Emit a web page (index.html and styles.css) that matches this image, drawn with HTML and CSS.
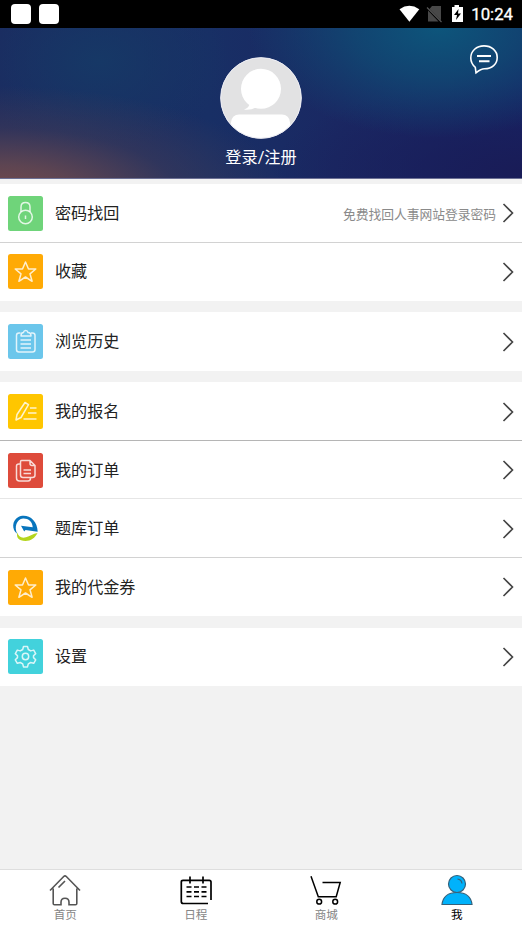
FILE: index.html
```html
<!DOCTYPE html>
<html lang="zh-CN">
<head>
<meta charset="utf-8">
<title>我</title>
<link rel="stylesheet" href="styles.css">
</head>
<body>
<svg class="defs" aria-hidden="true">
  <symbol id="star" viewBox="0 0 35 35"><path d="M17.500 8l3 7h7.300l-5.800 4.800 2.100 7.500-6.600-4.300-6.600 4.300 2.100-7.500L7.200 15h7.300z"/></symbol>
  <symbol id="arrow" viewBox="0 0 12 20"><path d="M1.500 1l9 9-9 9"/></symbol>
</svg>
<div class="screen">
  <div class="status">
    <i class="block"></i><i class="block"></i>
    <svg class="signals" width="66" height="20" viewBox="0 0 66 20">
      <path fill="#fff" d="M.5 5.200Q10.300 -1.500 20.300 5.200L10.400 17.800z"/>
      <path fill="#484848" d="M33 2h9v14.500L30.500 5zM29 6.500L39.500 17.500H29z"/>
      <path stroke="#555" stroke-width="1.300" d="M28 3.500l14.500 14.500"/>
      <path fill="#fff" d="M55.500 1h4.500v2h4v15H53V3h2.500z"/>
      <path fill="#000" d="M59.500 5l-4.500 6h3l-1 5 5-6.500h-3z"/>
    </svg>
    <span class="time">10:24</span>
  </div>
  <header class="profile">
    <svg class="avatar" width="82" height="82" viewBox="0 0 82 82">
      <clipPath id="round"><circle cx="41" cy="41" r="40"/></clipPath>
      <circle cx="41" cy="41" r="40.500" fill="#e2e2e3"/>
      <g clip-path="url(#round)" fill="#fff"><circle cx="41" cy="31.800" r="20"/><path d="M30 46q-1 5-6 6.500 6 1 12-2z"/><rect x="11" y="57.500" width="59" height="34" rx="8"/></g>
      <circle cx="41" cy="41" r="40.300" fill="none" stroke="#eeeef5"/>
    </svg>
    <span class="login">登录/注册</span>
    <svg class="chat" width="30" height="31" viewBox="0 0 30 31" fill="none" stroke="#fff">
      <path stroke-width="1.600" d="M6.300 23.300C3.300 20.800 1.800 17.500 1.800 14 1.800 6.800 7.500 1.900 15 1.900S28.200 6.800 28.200 13.500 23 24.800 15.500 24.800c-2.500 0-5 1.200-8.500 4z"/>
      <path stroke-width="2" d="M8 12h14M10 17.300h10.500"/>
    </svg>
  </header>
  <main>
    <section class="group">
      <div class="row"><svg class="icon green" viewBox="0 0 35 35"><circle cx="17.500" cy="21" r="6.800"/><path d="M13 16v-5q0-4.500 4.500-4.500t4.500 4.500v5M17.500 19.500v3.500"/></svg><span class="label">密码找回</span><span class="hint">免费找回人事网站登录密码</span><svg class="arrow"><use href="#arrow"/></svg></div>
      <div class="row"><svg class="icon orange"><use href="#star"/></svg><span class="label">收藏</span><svg class="arrow"><use href="#arrow"/></svg></div>
    </section>
    <section class="group">
      <div class="row"><svg class="icon blue" viewBox="0 0 35 35"><path d="M12.500 9H11q-2.500 0-2.500 2.500v14Q8.500 28 11 28h13.500q2.500 0 2.500-2.500v-14Q27 9 24.500 9H23M13 12h10q0-3.500-3-3.500-.5-2-2.300-2t-2.300 2q-2.400 0-2.400 3.500zM12.500 16H23M12.500 20H23M12.500 24H23"/></svg><span class="label">浏览历史</span><svg class="arrow"><use href="#arrow"/></svg></div>
    </section>
    <section class="group">
      <div class="row strong"><svg class="icon yellow" viewBox="0 0 35 35"><path d="M8 26l1-5.500L17 8.500l3.500 2.200L13 23.500zM22 14h6.500M20 19h8.500M15.500 25h13"/></svg><span class="label">我的报名</span><svg class="arrow"><use href="#arrow"/></svg></div>
      <div class="row light"><svg class="icon red" viewBox="0 0 35 35"><path d="M13.500 7.500H22l5 5V22q0 2.500-2.500 2.500h-9.500q-2.500 0-2.500-2.500V9q0-1.500 1-1.500zM22 7.500v3q0 2 2 2h3M12 11h-1q-2.500 0-2.500 2v12q0 3 3 3H20q2.500 0 2.500-3M15.500 17h7.500M15.500 20.500h7.500"/></svg><span class="label">我的订单</span><svg class="arrow"><use href="#arrow"/></svg></div>
      <div class="row"><svg class="icon brand" viewBox="0 0 35 35"><path fill="#0875bd" d="M9.200 22.800C3.500 18.500 4 9.500 10 6.200 18 1.800 29.500 7.500 29.700 20.800L17.500 19l-1.300 1.500L13 14.700l11.700 1.600C24.500 10.500 20 7.300 15 7.600 8.500 8.200 6 16.500 9.200 22.800z"/><path fill="#b4d51e" d="M9.500 21.500c.8 4.300 4 6 8.500 4.800 4-1 7-3.500 11.500-4.300-2.500 4.800-6.500 8-12 8-7 0-9.700-4-8-8.500z"/></svg><span class="label">题库订单</span><svg class="arrow"><use href="#arrow"/></svg></div>
      <div class="row"><svg class="icon orange"><use href="#star"/></svg><span class="label">我的代金券</span><svg class="arrow"><use href="#arrow"/></svg></div>
    </section>
    <section class="group">
      <div class="row"><svg class="icon cyan" viewBox="0 0 35 35"><circle cx="17.500" cy="17.500" r="3.200"/><path d="M15.500 7.500h4l.8 3 2.400 1.400 3-.8 2 3.500-2.200 2.200v1.800l2.200 2.200-2 3.500-3-.8-2.400 1.400-.8 3h-4l-.8-3-2.400-1.400-3 .8-2-3.500 2.200-2.200v-1.800l-2.200-2.200 2-3.500 3 .8 2.400-1.400z"/></svg><span class="label">设置</span><svg class="arrow"><use href="#arrow"/></svg></div>
    </section>
  </main>
  <nav class="tabs">
    <div class="tab"><svg viewBox="0 0 34 34" stroke="#555" stroke-width="1.600"><path d="M2 17.500L15.700 3.500q1.300-1.300 2.600 0L32 17.500M5.200 15.500v15q0 1.300 1.300 1.300H13v-2.500q0-4 4-4t4 4v2.500h6.500q1.300 0 1.300-1.300v-15M10.500 14.500l6.500-6.500"/></svg><span>首页</span></div>
    <div class="tab"><svg viewBox="0 0 34 34" stroke="#000" stroke-width="1.700"><path d="M32 27V9q0-1.700-1.700-1.700H4Q2.300 7.300 2.300 9v19.500q0 2 2 2H29M11 3.500v7M24 3.500v7M7.500 14h5M15 14h5M22.500 14h5M7.500 18.800h5M15 18.800h5M22.500 18.800h5M7.500 23.500h5M15 23.500h5M22.500 23.500h5"/></svg><span>日程</span></div>
    <div class="tab"><svg viewBox="0 0 34 34" stroke="#000" stroke-width="1.500"><path d="M2 3.300l7.300 20.500h17.900l4-14.300H13.500"/><circle cx="10.200" cy="28.700" r="2.400"/><circle cx="26.200" cy="28.700" r="2.400"/></svg><span>商城</span></div>
    <div class="tab active"><svg viewBox="0 0 34 34" stroke="#35617a" stroke-width="1.200"><path d="M2 31.500C3 23 9 19.500 17 19.500s14 3.500 15 12z"/><circle cx="17" cy="11" r="8.500"/><path fill="none" d="M17.500 6q4 .5 4.500 4.500"/></svg><span>我</span></div>
  </nav>
</div>
</body>
</html>
```
FILE: styles.css
```css
* { box-sizing: border-box; }
body { margin: 0; font-family: Roboto, "Noto Sans CJK SC", sans-serif; color: #222; }
.defs { display: none; }
.screen { width: 522px; height: 928px; display: flex; flex-direction: column; background: #f2f2f2; overflow: hidden; }
.status { height: 28px; flex: none; background: #000; display: flex; align-items: center; padding: 0 9px 0 11px; }
.block { width: 20px; height: 20px; border-radius: 4px; background: #fff; margin-right: 8px; }
.signals { margin-left: auto; margin-right: 6px; }
.time { color: #fff; font-size: 16.8px; line-height: 28px; -webkit-text-stroke: .3px #fff; }
.profile {
  position: relative; height: 151px; flex: none; display: flex; flex-direction: column; align-items: center; padding-top: 29px;
  border-bottom: 1px solid #6c7094;
  background:
    radial-gradient(ellipse 290px 110px at 0 112%, #784b4a 0, rgba(105,73,79,.85) 28%, rgba(70,60,85,.5) 62%, transparent 100%),
    radial-gradient(ellipse 190px 110px at 84% 0, #0d557b 0, rgba(15,77,117,.75) 45%, transparent 100%),
    radial-gradient(ellipse 130px 90px at 19% 22%, #163866 0, transparent 100%),
    radial-gradient(ellipse 250px 90px at 100% 95%, #191c57 0, transparent 100%),
    linear-gradient(90deg, #1b2b60, #182f65 40%, #1a2863 65%, #182365);
}
.login { color: #fff; font-size: 16.2px; line-height: 24px; margin-top: 7px; }
.chat { position: absolute; right: 23px; top: 16px; }
main { padding-top: 5px; }
.group { margin-bottom: 11.4px; background: #fff; }
.row { height: 58.5px; display: flex; align-items: center; padding: 1px 8px 0; border-bottom: 1px solid #d2d2d2; }
.row.strong { border-bottom-color: #b5b5b5; }
.row.light { border-bottom-color: #e6e6e6; }
.row:last-child { border-bottom: 0; padding-top: 0; }
.icon { width: 35px; height: 35px; flex: none; border-radius: 2.5px; fill: none; stroke: rgba(255,255,255,.8); stroke-width: 1.5; stroke-linejoin: round; }
.green { background: #6fd47a; }
.orange { background: #ffaa05; }
.blue { background: #6bc6eb; }
.yellow { background: #ffc600; }
.red { background: #de4b3b; }
.cyan { background: #42d2dc; }
.brand { stroke: none; }
.label { margin-left: 12px; padding-top: 1px; font-size: 16.1px; line-height: 24px; }
.hint { margin-left: auto; margin-right: 6px; font-size: 12.75px; color: #8a8a8a; }
.arrow { width: 12px; height: 20px; flex: none; fill: none; stroke: #444; stroke-width: 1.6; }
.label + .arrow { margin-left: auto; }
.tabs { height: 59px; margin-top: auto; flex: none; display: grid; grid-template-columns: repeat(4, 1fr); background: #fff; border-top: 1px solid #dedede; }
.tab { display: flex; flex-direction: column; align-items: center; padding-top: 3px; font-size: 11.6px; line-height: 16px; color: #858585; }
.tab svg { width: 34px; height: 34px; fill: none; stroke-linecap: butt; }
.tab.active svg { fill: #00b2fb; }
.active { color: #000; }
```
